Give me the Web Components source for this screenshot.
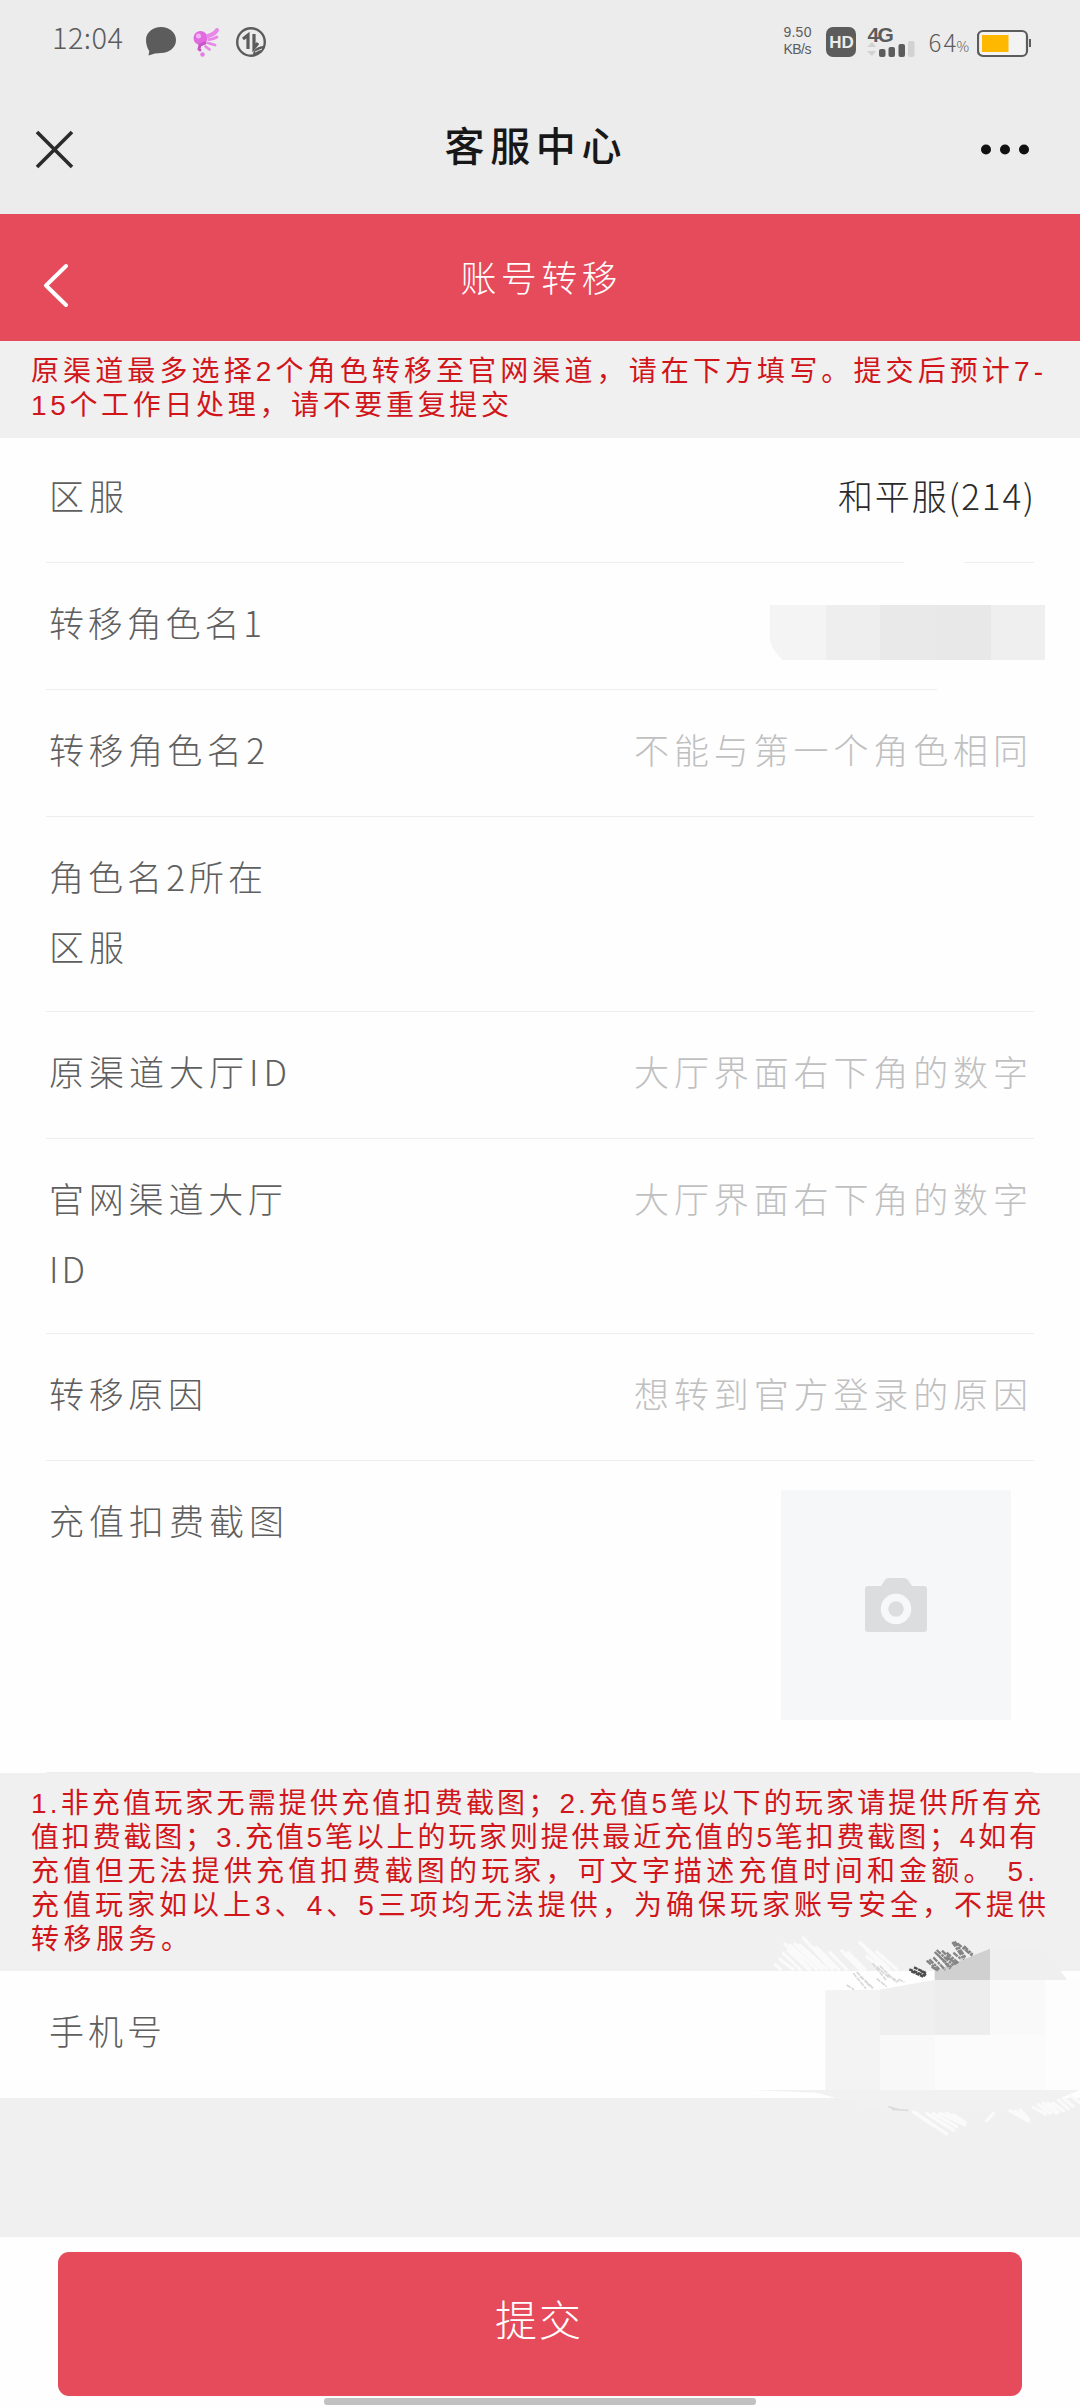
<!DOCTYPE html>
<html lang="zh-CN">
<head>
<meta charset="utf-8">
<title>客服中心</title>
<style>
  body {
    margin: 0;
    width: 1080px;
    height: 2408px;
    overflow: hidden;
    background: #f0f0f0;
    font-family: "Noto Sans CJK SC", sans-serif;
    font-weight: 300;
  }
</style>
</head>
<body>
<transfer-page></transfer-page>

<template id="status-bar">
  <style>
    :host { display: flex; justify-content: space-between; height: 80px; padding: 0 49px 0 52px; color: #5c5c5c; box-sizing: border-box; }
    .side { display: flex; align-items: flex-start; }
    svg { display: block; }
    .time { font-size: 29px; line-height: 30px; margin-top: 21px; }
    .speed { display: flex; flex-direction: column; font: 14px/17px "Liberation Sans", sans-serif; margin: 24px 15px 0 0; }
    .hd { width: 30px; height: 30px; margin-top: 27px; border-radius: 7px; background: #5c5c5c; color: #ececec; font: bold 17px/31px "Liberation Sans", sans-serif; text-align: center; }
    .net { width: 49px; margin: 24px 12px 0 11px; }
    .net b { display: block; font: bold 21px/21px "Liberation Sans", sans-serif; height: 17px; letter-spacing: -1.5px; }
    .pct { display: flex; align-items: baseline; margin: 28px 8px 0 0; font-size: 24px; line-height: 28px; }
    .pct small { font-size: 14px; }
  </style>
  <div class="side">
    <fit-text class="time" w="71">12:04</fit-text>
    <svg width="160" height="80" viewBox="1 0 160 80">
      <path d="M39 27c8.500 0 15 5.600 15 13s-6.500 13-15 13l-6 .5-6.500 2 .8-4.200C25.500 48.500 24 44.700 24 40c0-7.400 6.500-13 15-13z" fill="#5c5c5c"/>
      <circle cx="78.500" cy="38" r="7" fill="#e269e0"/>
      <circle cx="76.500" cy="36" r="2.500" fill="#f5b5f5"/>
      <g fill="none" stroke="#e887e8" stroke-linecap="round">
        <path d="M83 43l-5 2-1 4 1 1" stroke="#c954c6" stroke-width="3"/>
        <path d="M86 36q7-2 9-6" stroke-width="4"/>
        <path d="M87 39.500q5-.5 8-2.500M86 43l7 2M83.500 46.500l4 3" stroke-width="2.800"/>
      </g>
      <circle cx="80.500" cy="54.500" r="2.200" fill="#e878e8"/>
      <circle cx="129" cy="42" r="13.800" fill="none" stroke="#5c5c5c" stroke-width="2.400"/>
      <path d="M121 39l5-4v14M132 34v14l4-5" fill="none" stroke="#5c5c5c" stroke-width="3.200"/>
      <path d="M131 55c0-6 5-9 12-9-1 5-5 9-12 9z" fill="#5c5c5c"/>
      <path d="M133 52q4-2 7-3" stroke="#ececec" fill="none"/>
    </svg>
  </div>
  <div class="side">
    <div class="speed"><fit-text w="28">9.50</fit-text><fit-text w="28">KB/s</fit-text></div>
    <div class="hd">HD</div>
    <div class="net">
      <b>4G</b>
      <svg width="49" height="16" viewBox="0 0 49 16">
        <path d="M0 6l5-5 4 5zM0 10h9l-4 5z" fill="#d2d2d2"/>
        <g fill="#5c5c5c">
          <rect x="12" y="8" width="6.500" height="8" rx="2"/>
          <rect x="21.500" y="6" width="6.500" height="10" rx="2"/>
          <rect x="31.500" y="3" width="6.500" height="13" rx="2"/>
        </g>
        <rect x="41" y="0" width="6.500" height="16" rx="2" fill="#d2d2d2"/>
      </svg>
    </div>
    <div class="pct"><fit-text w="28">64</fit-text><small>%</small></div>
    <svg width="54" height="80" viewBox="0 0 54 80">
      <rect x="1" y="31" width="49" height="25" rx="5" fill="#f3f3f3" stroke="#5c5c5c" stroke-width="2.200"/>
      <rect x="5" y="35" width="26.500" height="17" fill="#ffb802"/>
      <path d="M53 39v8" stroke="#5c5c5c" stroke-width="2"/>
    </svg>
  </div>
</template>

<template id="title-bar">
  <style>
    :host { display: grid; grid-template-columns: 100px 1fr 100px; align-items: center; height: 134px; box-sizing: border-box; color: #171717; font-size: 40px; font-weight: 500; }
    div { display: flex; justify-content: center; padding: 0 14px 7px 0; }
    svg { display: block; }
  </style>
  <svg width="100" height="134"><path d="M37 52l35 35M72 52L37 87" stroke="#2b2b2b" stroke-width="3.600"/></svg>
  <div><slot></slot></div>
  <svg width="100" height="134" fill="#111"><circle cx="6" cy="69.500" r="5"/><circle cx="25" cy="69.500" r="5"/><circle cx="44" cy="69.500" r="5"/></svg>
</template>

<template id="page-header">
  <style>
    :host { display: grid; grid-template-columns: 100px 1fr 100px; align-items: center; height: 127px; background: #e64b5b; color: #fff; font-size: 36px; }
    div { display: flex; justify-content: center; padding: 0 2px 4px 0; }
  </style>
  <svg width="100" height="127"><path d="M66 52L46 71.500 66 91" fill="none" stroke="#fff" stroke-width="4" stroke-linecap="round" stroke-linejoin="round"/></svg>
  <div><slot></slot></div>
</template>

<template id="notice-text">
  <style>
    :host { display: flex; flex-direction: column; box-sizing: border-box; padding: 14px 31px 0; background: #f0f0f0; color: #d0161b; font: 28px/34px "Liberation Sans", "Noto Sans CJK SC", sans-serif; }
  </style>
  <slot></slot>
</template>

<template id="field-row">
  <style>
    :host { display: block; background: #fefefe; padding: 0 46px; }
    .row { display: flex; justify-content: space-between; box-sizing: border-box; height: var(--height, 127px); padding: var(--top, 24px) 0 0 3px; border-bottom: 1px solid var(--line, #eee); font-size: 35px; line-height: 70px; }
    .label { color: #5f5f5f; }
    .value { color: #c0c0c1; padding-right: var(--gap, 6px); }
    :host([filled]) .value { color: #2a2a2a; }
  </style>
  <div class="row">
    <div class="label"><slot></slot></div>
    <div class="value"><slot name="value"></slot></div>
  </div>
</template>

<template id="photo-picker">
  <style>
    :host { display: flex; align-items: center; justify-content: center; width: 230px; height: 230px; margin-top: 5px; background: #f6f7f9; }
  </style>
  <svg width="62" height="54" viewBox="0 0 62 54">
    <path d="M3 8h13l4-6q1-2 4-2h15q2 0 4 2l4 6h12q3 0 3 3v40q0 3-3 3H3q-3 0-3-3V11q0-3 3-3z" fill="#dcddde"/>
    <circle cx="31" cy="31" r="11.500" fill="#dcddde" stroke="#f7f8fa" stroke-width="7.500"/>
  </svg>
</template>

<template id="name-mask">
  <style>
    :host { position: absolute; left: 750px; top: 545px; }
    svg { display: block; }
  </style>
  <svg width="310" height="155">
    <path d="M154 15h60v7h-60zM187 140h98v7h-98z" fill="#fefefe"/>
    <path d="M20 60h56v55H33q-9-7-13-19z" fill="#f4f4f4"/>
    <path d="M76 60h54v55H76z" fill="#eee"/>
    <path d="M130 60h56v55h-56z" fill="#e9e9e9"/>
    <path d="M186 60h55v55h-55z" fill="#e8e8e8"/>
    <path d="M241 60h54v55h-54z" fill="#efefef"/>
  </svg>
</template>

<template id="phone-mask">
  <style>
    :host { position: absolute; left: 720px; top: 1920px; }
    svg { display: block; }
  </style>
  <svg width="360" height="240" viewBox="0 0 1080 720">
    <path d="M316 211l164-2 164-29h330v330H316z" fill="#f3f3f3"/>
    <path d="M480 209l164-29v165H480z" fill="#efefef"/>
    <path d="M644 180h166v165H644z" fill="#ededed"/>
    <path d="M810 180h164v165H810z" fill="#f9f9f9"/>
    <path d="M480 345h494v165H480z" fill="#fbfbfb"/>
    <path d="M480 345h164v165H480z" fill="#f8f8f8"/>
    <path d="M644 153l166-67v94H644z" fill="#d0d0d0"/>
    <path d="M810 86l160 0 72 94H810z" fill="#efefef"/>
    <path d="M95 510h983l-150 66H500l-210-58z" fill="#f1f1f1"/>
    <path d="M974 180h106v330H974z" fill="#fdfdfd"/>
    <g fill="none" stroke="#fafafa" stroke-width="10" stroke-linecap="round">
      <path d="M195 72l75 75M205 92l60 55M180 118l40 30M166 134l16 14M250 54l85 93M225 72l80 75M210 76l80 72M240 76l80 72M290 82l66 66M280 84l60 62M365 92l55 56M385 98l50 50M375 104l50 44M420 68l88 80M440 90l60 58M470 96l60 52M190 100l50 48M330 98l50 50M440 110l50 38"/>
      <path d="M580 576l60 40M590 580l90 62M620 580l80 50M640 580l70 40M660 580l75 35M680 580l55 28M700 585l36 22M870 572l56 32M885 574l40 26M900 570l24 26M940 562l36 20M955 554l36 26M970 550l40 30M985 550l30 26M1000 550l30 22M1015 540l30 26M1030 535l30 24M1050 526l30 22M820 580l-20 22"/>
    </g>
    <path d="M380 195l22 14M400 160l38 46M410 156l34 34M420 170l40 34M440 190l18 14M458 130l40 50M470 140l36 32M480 138l50 50M470 176l30 24M500 165l36 20M535 178l18 8" stroke="#d8d8d8" stroke-width="5" stroke-dasharray="14 3" fill="none"/>
    <path d="M568 148l48 20M574 154l36 16M582 142l38 18M600 150l18 16" stroke="#4c4c4c" stroke-width="7" stroke-dasharray="12 2" fill="none"/>
    <path d="M620 122l34 30M628 118l30 30M640 112l36 38M644 96l50 46M650 90l50 46M655 106l36 40M666 92l42 42M680 98l36 32M680 110l30 22M635 140l18 12M697 66l35 52M704 64l32 48M700 98l24 20M712 70l46 38M732 78l26 26" stroke="#858585" stroke-width="7" stroke-dasharray="17 3 8 2" fill="none"/>
    <path d="M505 560l35 10M515 568l50 3" stroke="#dcdcdc" stroke-width="5" fill="none"/>
  </svg>
</template>

<template id="submit-bar">
  <style>
    :host { display: flex; flex-direction: column; align-items: center; height: 171px; background: #fefefe; }
    button { width: 964px; height: 144px; margin-top: 15px; padding: 0 4px 14px 0; box-sizing: border-box; border: 0; border-radius: 11px; background: #e64b5b; color: #fff; font: inherit; font-size: 42px; display: flex; align-items: center; justify-content: center; flex: none; }
    i { width: 432px; height: 7px; margin-top: 2px; border-radius: 3px; background: #c1c1c1; flex: none; }
  </style>
  <button><slot></slot></button>
  <i></i>
</template>

<template id="transfer-page">
  <style>
    :host { display: flex; flex-direction: column; position: relative; width: 1080px; height: 2408px; }
    .top { background: #ececec; }
    .first { --height: 125px; --top: 22px; --gap: 0px; }
    .tall { --height: 195px; }
    .photo { --height: 312px; --gap: 23px; }
    .phone { --line: transparent; }
    .before { height: 97px; }
    .after { height: 198px; }
    submit-bar { margin-top: auto; }
  </style>
  <div class="top">
    <status-bar></status-bar>
    <title-bar><fit-text w="177">客服中心</fit-text></title-bar>
  </div>
  <page-header><fit-text w="157">账号转移</fit-text></page-header>
  <notice-text class="before">
    <fit-text w="1012">原渠道最多选择2个角色转移至官网渠道，请在下方填写。提交后预计7-</fit-text>
    <fit-text w="478">15个工作日处理，请不要重复提交</fit-text>
  </notice-text>
  <field-row class="first" filled>
    <fit-text w="75">区服</fit-text>
    <fit-text slot="value" w="196">和平服(214)</fit-text>
  </field-row>
  <field-row><fit-text w="213">转移角色名1</fit-text></field-row>
  <field-row>
    <fit-text w="216">转移角色名2</fit-text>
    <fit-text slot="value" w="394">不能与第一个角色相同</fit-text>
  </field-row>
  <field-row class="tall">
    <fit-text w="214">角色名2所在</fit-text>
    <fit-text w="75">区服</fit-text>
  </field-row>
  <field-row>
    <fit-text w="238">原渠道大厅ID</fit-text>
    <fit-text slot="value" w="394">大厅界面右下角的数字</fit-text>
  </field-row>
  <field-row class="tall">
    <fit-text w="234">官网渠道大厅</fit-text>
    <fit-text w="36">ID</fit-text>
    <fit-text slot="value" w="394">大厅界面右下角的数字</fit-text>
  </field-row>
  <field-row>
    <fit-text w="154">转移原因</fit-text>
    <fit-text slot="value" w="394">想转到官方登录的原因</fit-text>
  </field-row>
  <field-row class="photo">
    <fit-text w="235">充值扣费截图</fit-text>
    <photo-picker slot="value"></photo-picker>
  </field-row>
  <notice-text class="after">
    <fit-text w="1010">1.非充值玩家无需提供充值扣费截图；2.充值5笔以下的玩家请提供所有充</fit-text>
    <fit-text w="1006">值扣费截图；3.充值5笔以上的玩家则提供最近充值的5笔扣费截图；4如有</fit-text>
    <fit-text w="1004">充值但无法提供充值扣费截图的玩家，可文字描述充值时间和金额。 5.</fit-text>
    <fit-text w="1015">充值玩家如以上3、4、5三项均无法提供，为确保玩家账号安全，不提供</fit-text>
    <fit-text w="158">转移服务。</fit-text>
  </notice-text>
  <field-row class="phone"><fit-text w="113">手机号</fit-text></field-row>
  <submit-bar><fit-text w="86">提交</fit-text></submit-bar>
  <name-mask></name-mask>
  <phone-mask></phone-mask>
</template>

<script>
const names = ['transfer-page', 'status-bar', 'title-bar', 'page-header', 'notice-text',
  'field-row', 'photo-picker', 'name-mask', 'phone-mask', 'submit-bar']

for (const name of names) {
  customElements.define(name,
    class extends HTMLElement {
      constructor () {
        super()
        this.attachShadow({ mode: 'open' })
          .appendChild(document.getElementById(name).content.cloneNode(true))
      }
    }
  )
}

customElements.define('fit-text',
  /**
   * One line of text, tracked out to the width in its w attribute.
   */
  class extends HTMLElement {
    constructor () {
      super()
      this.attachShadow({ mode: 'open' }).innerHTML = `
        <style>
          :host { display: block; white-space: nowrap; }
          span { display: inline-block; }
        </style>
        <span><slot></slot></span>
      `
    }

    connectedCallback () {
      const span = this.shadowRoot.querySelector('span')
      const width = Number(this.getAttribute('w'))
      const gaps = this.textContent.length - 1
      this.style.width = width + 'px'
      span.style.letterSpacing = (width - span.getBoundingClientRect().width) / gaps + 'px'
    }
  }
)
</script>
</body>
</html>
